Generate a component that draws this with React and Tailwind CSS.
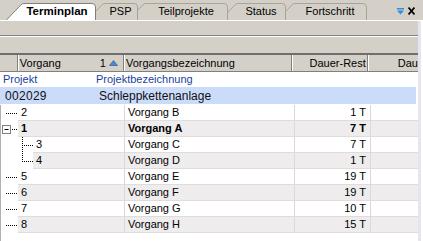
import React from "react";

const tabs = [
  { label: "Terminplan", w: 90, ml: 6, active: true, z: "z-50" },
  { label: "PSP", w: 51, ml: -9, z: "z-40" },
  { label: "Teilprojekte", w: 100, ml: -10, z: "z-30" },
  { label: "Status", w: 66, ml: -8, z: "z-20" },
  { label: "Fortschritt", w: 90, ml: -9, z: "z-10" },
];

function Tab({ t }) {
  const H = 17;
  const S = 16;
  const W = t.w;
  const d = `M0.5 ${H} L${S - 1} 1.8 Q${S} 0.5 ${S + 2} 0.5 L${W - 4} 0.5 Q${W - 0.5} 0.5 ${W - 0.5} 4 L${W - 0.5} ${H}`;
  return (
    <div
      className={`relative h-[17px] shrink-0 ${t.z}`}
      style={{ width: W, marginLeft: t.ml }}
    >
      <svg className="absolute inset-0" width={W} height={H} viewBox={`0 0 ${W} ${H}`}>
        <path
          d={d}
          fill={t.active ? "#ffffff" : "#d4d0c8"}
          stroke={t.active ? "#7f7f7f" : "#a8a49c"}
          strokeWidth="1"
        />
      </svg>
      <div
        className={`relative h-full flex items-center justify-center pl-[16px] ${
          t.active ? "font-bold text-[11.5px] pr-[4px]" : "text-[11px]"
        }`}
      >
        {t.label}
      </div>
    </div>
  );
}

const rows = [
  { id: "2", name: "Vorgang B", dur: "1 T", tree: "leaf" },
  { id: "1", name: "Vorgang A", dur: "7 T", tree: "parent", bold: true },
  { id: "3", name: "Vorgang C", dur: "7 T", tree: "child" },
  { id: "4", name: "Vorgang D", dur: "1 T", tree: "last" },
  { id: "5", name: "Vorgang E", dur: "19 T", tree: "leaf" },
  { id: "6", name: "Vorgang F", dur: "19 T", tree: "leaf" },
  { id: "7", name: "Vorgang G", dur: "10 T", tree: "leaf" },
  { id: "8", name: "Vorgang H", dur: "15 T", tree: "leaf" },
];

function Tree({ kind }) {
  const dot = { stroke: "#000", strokeWidth: 1, strokeDasharray: "1 1" };
  if (kind === "leaf") {
    return (
      <svg width="17" height="16" className="shrink-0">
        <line x1="5" y1="8.5" x2="17" y2="8.5" {...dot} />
      </svg>
    );
  }
  if (kind === "parent") {
    return (
      <svg width="17" height="16" className="shrink-0">
        <rect x="1.5" y="4.5" width="8" height="8" fill="#fff" stroke="#808080" />
        <line x1="3.5" y1="8.5" x2="7.5" y2="8.5" stroke="#000" />
        <line x1="11" y1="8.5" x2="17" y2="8.5" {...dot} />
      </svg>
    );
  }
  return (
    <svg width="32" height="16" className="shrink-0">
      <line x1="21.5" y1="0" x2="21.5" y2={kind === "last" ? 9 : 16} {...dot} />
      <line x1="23" y1="8.5" x2="32" y2="8.5" {...dot} />
    </svg>
  );
}

export default function App() {
  return (
    <div className="w-[423px] h-[241px] overflow-hidden bg-white text-black text-[11px] leading-none font-['Liberation_Sans',Arial,sans-serif]">
      {/* Tab strip */}
      <div className="h-[21px] bg-[#d4d0c8] border-b border-white flex items-end">
        {tabs.map((t) => (
          <Tab key={t.label} t={t} />
        ))}
        <div className="ml-auto self-stretch flex items-center gap-[4px] pr-[8px] pt-[2px]">
          <svg width="7" height="7" viewBox="0 0 7 7">
            <rect x="0" y="0" width="7" height="1.5" fill="#2f8ee0" />
            <path d="M0 2.5 L7 2.5 L3.5 6.5 Z" fill="#2f8ee0" />
          </svg>
          <svg width="7" height="8" viewBox="0 0 7 8">
            <path d="M0.5 0.5 L6.5 7.5 M6.5 0.5 L0.5 7.5" stroke="#000" strokeWidth="1.7" />
          </svg>
        </div>
      </div>

      <div className="flex">
        <div className="w-[418px] flex flex-col">
          {/* toolbar bars */}
          <div className="h-[15px] bg-[#d4d0c8] border-b border-[#808080]" />
          <div className="h-[19px] bg-[#d4d0c8] border-t border-white border-b-2 border-b-[#6e6e6e]" />

          {/* header */}
          <div className="h-[17px] bg-[#d4d0c8] border-b border-[#808080] flex">
            <div className="w-[18px] border-r border-r-[#808080]" />
            <div className="w-[107px] border-l border-l-white border-r border-r-[#808080] flex items-center justify-between pl-[1px] pr-[5px]">
              <span>Vorgang</span>
              <span className="flex items-center gap-[3px]">
                1
                <svg width="9" height="6" viewBox="0 0 9 6">
                  <path d="M0.5 5.5 L4.5 0.5 L8.5 5.5 Z" fill="#3a8ee6" stroke="#3a4a6a" strokeWidth="0.6" />
                </svg>
              </span>
            </div>
            <div className="w-[170px] border-l border-l-white border-r border-r-[#808080] flex items-center pl-[1px]">
              Vorgangsbezeichnung
            </div>
            <div className="w-[76px] border-l border-l-white border-r border-r-[#808080] flex items-center justify-end pr-[1px]">
              Dauer-Rest
            </div>
            <div className="flex-1 border-l border-l-white flex items-center pl-[29px] whitespace-nowrap">
              Dau
            </div>
          </div>

          {/* Projekt label row */}
          <div className="h-[15px] flex items-center text-[#1b3f9e]">
            <div className="w-[96px] pl-[3px]">Projekt</div>
            <div>Projektbezeichnung</div>
          </div>

          {/* project row */}
          <div className="h-[17px] mb-[1px] mr-[2px] bg-[#cbdcfa] flex items-center text-[12px] text-[#111]">
            <div className="w-[99px] pl-[5px] tracking-[0.3px]">002029</div>
            <div>Schleppkettenanlage</div>
          </div>

          {/* rows */}
          <div className="border-l border-[#b4b0b0] flex flex-col h-[136px]">
            {rows.map((r, i) => {
              const child = r.tree === "child" || r.tree === "last";
              const bg = i % 2 === 1 ? "bg-[#eeecec]" : "bg-white";
              return (
                <div key={r.id} className={`h-[16px] flex ${r.bold ? "font-bold" : ""}`}>
                  <Tree kind={r.tree} />
                  <div className={`flex-1 flex border-b border-[#e0dcdc] ${bg}`}>
                    <div
                      className={`${child ? "w-[92px]" : "w-[107px]"} border-r border-[#dcd8d8] flex items-center pl-[3px]`}
                    >
                      {r.id}
                    </div>
                    <div className="w-[170px] border-r border-[#dcd8d8] flex items-center pl-[3px]">
                      {r.name}
                    </div>
                    <div className="w-[76px] border-r border-[#dcd8d8] flex items-center justify-end pr-[4px]">
                      {r.dur}
                    </div>
                    <div className="flex-1" />
                  </div>
                </div>
              );
            })}
          </div>
          <div className="flex-1" />
        </div>
        <div className="w-[3px] h-[220px] bg-[#e6e4f2]" />
        <div className="w-[2px] bg-white" />
      </div>
    </div>
  );
}
